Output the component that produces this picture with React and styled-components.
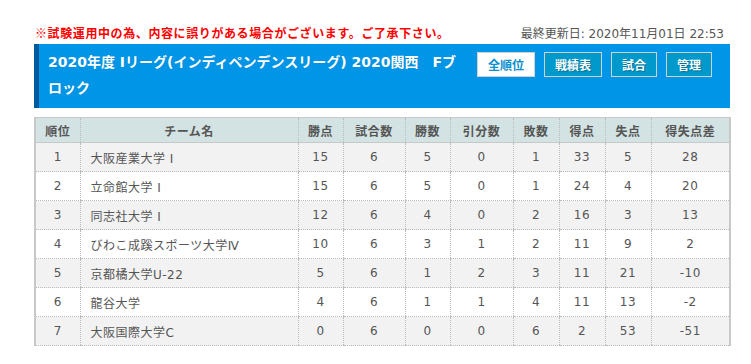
import React from "react";
import styled, { createGlobalStyle } from "styled-components";

const Global = createGlobalStyle`
  html, body { margin: 0; padding: 0; background: #fff; }
  body { font-family: "DejaVu Sans", "Noto Sans CJK JP", sans-serif; color: #555; }
`;

const Page = styled.div`
  width: 696px;
  margin-left: 34px;
  padding-top: 22px;
`;

const NoticeRow = styled.div`
  display: flex;
  justify-content: space-between;
  align-items: center;
  height: 20px;
  margin-bottom: 2px;
  padding-right: 6px;
  font-size: 12px;
`;

const Warning = styled.span`
  color: #ff0000;
  font-weight: bold;
  padding-left: 1px;
  letter-spacing: 0.6px;
  font-family: "Noto Sans CJK JP", sans-serif;
`;

const Updated = styled.span`
  color: #555;
  font-size: 12px;
`;

const TitleBar = styled.div`
  display: flex;
  align-items: flex-start;
  justify-content: space-between;
  background: #0095e6;
  border-left: 5px solid #005a9e;
  padding: 5px 18px 7px 9px;
`;

const Title = styled.h1`
  margin: 0;
  width: 415px;
  font-size: 14px;
  line-height: 26px;
  font-weight: bold;
  color: #fff;
  text-shadow: 0 0 1px rgba(0, 0, 0, 0.15);
`;

const Buttons = styled.div`
  display: flex;
  gap: 9px;
  margin-top: 3px;
`;

const NavButton = styled.a`
  display: flex;
  align-items: center;
  justify-content: center;
  box-sizing: border-box;
  height: 25px;
  padding: 0 10px;
  border: 1px solid #d0d0d0;
  background: ${(p) => (p.$active ? "#fff" : "#0099cc")};
  color: ${(p) => (p.$active ? "#0a8fd0" : "#fff")};
  font-size: 12px;
  font-weight: bold;
  font-family: "Noto Sans CJK JP", sans-serif;
  text-shadow: ${(p) => (p.$active ? "none" : "1px 1px 1px rgba(0,0,0,0.3)")};
  cursor: pointer;
`;

const Table = styled.table`
  margin-top: 9px;
  width: 695px;
  border-collapse: collapse;
  table-layout: fixed;
  border-top: 1px solid #c8c8c8;
  border-left: 2px solid #c8c8c8;
  border-right: 2px solid #c8c8c8;
  font-size: 12px;
  color: #555;
`;

const HeadCell = styled.th`
  height: 24px;
  padding: 0;
  background: #d3e2e2;
  font-weight: bold;
  text-align: center;
  color: #555;
  letter-spacing: 0.5px;
  border-left: 1px dotted #bbb;
  border-bottom: 1px solid #c8c8c8;
  font-family: "Noto Sans CJK JP", sans-serif;
  &:first-child { border-left: none; }
`;

const Row = styled.tr`
  background: ${(p) => (p.$odd ? "#f2f2f2" : "#fff")};
`;

const Cell = styled.td`
  height: 28px;
  padding: 0;
  padding-left: ${(p) => (p.$left ? "10px" : "0")};
  text-align: ${(p) => (p.$left ? "left" : "center")};
  letter-spacing: 0.5px;
  border-left: 1px dotted #bbb;
  border-bottom: 1px dotted #bbb;
  white-space: nowrap;
  &:first-child { border-left: none; }
`;

const Footer = styled.div`
  margin-top: 18px;
  width: 5px;
  height: 4px;
  background: #d8d8d8;
`;

const widths = [45, 218, 45, 62, 45, 63, 46, 46, 46, 79];
const heads = ["順位", "チーム名", "勝点", "試合数", "勝数", "引分数", "敗数", "得点", "失点", "得失点差"];
const rows = [
  [1, "大阪産業大学 Ⅰ", 15, 6, 5, 0, 1, 33, 5, 28],
  [2, "立命館大学 Ⅰ", 15, 6, 5, 0, 1, 24, 4, 20],
  [3, "同志社大学 Ⅰ", 12, 6, 4, 0, 2, 16, 3, 13],
  [4, "びわこ成蹊スポーツ大学Ⅳ", 10, 6, 3, 1, 2, 11, 9, 2],
  [5, "京都橘大学U-22", 5, 6, 1, 2, 3, 11, 21, -10],
  [6, "龍谷大学", 4, 6, 1, 1, 4, 11, 13, -2],
  [7, "大阪国際大学C", 0, 6, 0, 0, 6, 2, 53, -51],
];

export default function App() {
  return (
    <>
      <Global />
      <Page>
        <NoticeRow>
          <Warning>※試験運用中の為、内容に誤りがある場合がございます。ご了承下さい。</Warning>
          <Updated>最終更新日: 2020年11月01日 22:53</Updated>
        </NoticeRow>
        <TitleBar>
          <Title>2020年度 Iリーグ(インディペンデンスリーグ) 2020関西　Fブロック</Title>
          <Buttons>
            <NavButton $active>全順位</NavButton>
            <NavButton>戦績表</NavButton>
            <NavButton>試合</NavButton>
            <NavButton>管理</NavButton>
          </Buttons>
        </TitleBar>
        <Table>
          <colgroup>
            {widths.map((w, i) => (
              <col key={i} style={{ width: w }} />
            ))}
          </colgroup>
          <thead>
            <tr>
              {heads.map((h) => (
                <HeadCell key={h}>{h}</HeadCell>
              ))}
            </tr>
          </thead>
          <tbody>
            {rows.map((r, i) => (
              <Row key={r[0]} $odd={i % 2 === 0}>
                {r.map((v, j) => (
                  <Cell key={j} $left={j === 1}>
                    {v}
                  </Cell>
                ))}
              </Row>
            ))}
          </tbody>
        </Table>
        <Footer />
      </Page>
    </>
  );
}
